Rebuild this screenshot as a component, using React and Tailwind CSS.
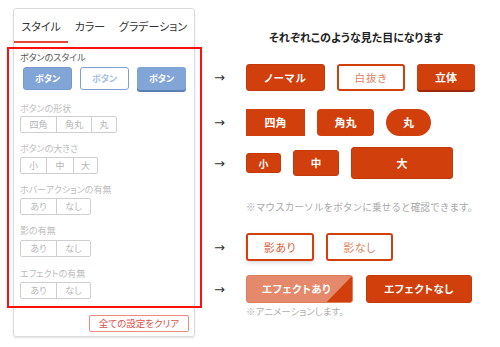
import React from "react";

const JP = { fontFamily: '"Noto Sans CJK JP", "Noto Sans", sans-serif' };

function Seg({ items, widths }) {
  return (
    <div className="flex h-[17px] border border-[#cfcfcf] rounded-[2px] w-fit bg-white">
      {items.map((t, i) => (
        <div
          key={t}
          className={`flex items-center justify-center text-[9px] text-[#b5b5b5] leading-none ${i > 0 ? "border-l border-[#cfcfcf]" : ""}`}
          style={{ width: widths[i] }}
        >
          {t}
        </div>
      ))}
    </div>
  );
}

function Label({ children, dark, className = "" }) {
  return (
    <div className={`h-[12px] text-[9px] leading-[12px] ${dark ? "text-[#555]" : "text-[#bdbdbd]"} ${className}`}>
      {children}
    </div>
  );
}

function Arrow() {
  return (
    <div className="w-[32px] flex items-center text-[13px] text-[#333] leading-none" style={{ fontFamily: '"DejaVu Sans", sans-serif' }}>
      →
    </div>
  );
}

export default function App() {
  return (
    <div className="w-[500px] h-[347px] bg-white flex overflow-hidden [font-feature-settings:'palt']" style={JP}>
      {/* Left panel */}
      <div className="relative ml-[13px] mt-[8px] w-[182px] h-[329px] border border-[#dcdcdc] rounded-[3px] shadow-[0_1px_2px_rgba(0,0,0,0.12)] flex flex-col">
        <div className="flex h-[34px] text-[11px] text-[#333]">
          <div className="w-[54px] flex items-center justify-center border-b-2 border-[#e8463a] pt-[3px]">スタイル</div>
          <div className="w-[44px] flex items-center justify-center pt-[1px]">カラー</div>
          <div className="w-[82px] flex items-center justify-center pt-[1px]">グラデーション</div>
        </div>
        <div className="flex flex-col pl-[6px]">
          <Label dark className="mt-[9px]">ボタンのスタイル</Label>
          <div className="flex gap-[8px] mt-[3px] ml-[3px]">
            <div className="w-[49px] h-[23px] rounded-[3px] bg-[#82a5d8] border border-[#7599cd] flex items-center justify-center text-white text-[9px] font-bold">ボタン</div>
            <div className="w-[49px] h-[23px] rounded-[3px] bg-white border-[1.5px] border-[#7ea1d4] flex items-center justify-center text-[#a9c0e3] text-[9px] font-bold">ボタン</div>
            <div className="w-[49px] h-[23px] rounded-[3px] bg-[#82a5d8] shadow-[0_2px_0_#5c7db0] flex items-center justify-center text-white text-[9px] font-bold">ボタン</div>
          </div>
          <Label className="mt-[13px]">ボタンの形状</Label>
          <div className="mt-[1px]"><Seg items={["四角", "角丸", "丸"]} widths={[35, 35, 25]} /></div>
          <Label className="mt-[10px]">ボタンの大きさ</Label>
          <div className="mt-[2px]"><Seg items={["小", "中", "大"]} widths={[25, 27, 24]} /></div>
          <Label className="mt-[10px]">ホバーアクションの有無</Label>
          <div className="mt-[2px]"><Seg items={["あり", "なし"]} widths={[35, 34]} /></div>
          <Label className="mt-[10px]">影の有無</Label>
          <div className="mt-[3px]"><Seg items={["あり", "なし"]} widths={[35, 34]} /></div>
          <Label className="mt-[11px]">エフェクトの有無</Label>
          <div className="mt-[2px]"><Seg items={["あり", "なし"]} widths={[35, 34]} /></div>
        </div>
        <div className="flex justify-end pr-[5px] mt-[16px]">
          <div className="w-[100px] h-[17px] border border-[#ea8a84] rounded-[2px] flex items-center justify-center text-[9.5px] text-[#e0504a] leading-none">全ての設定をクリア</div>
        </div>
        {/* red annotation frame */}
        <div className="absolute left-[-7px] top-[38px] w-[195px] h-[261px] border-2 border-[#ff1010] pointer-events-none" />
      </div>

      {/* Right column */}
      <div className="ml-[19px] w-[286px] flex flex-col">
        <div className="mt-[29px] h-[16px] text-center text-[11px] font-bold text-[#222] leading-[16px] pr-[2px]">それぞれこのような見た目になります</div>

        <div className="flex mt-[19px] h-[27px]">
          <Arrow />
          <div className="flex gap-[12px]">
            <div className="w-[79px] h-[27px] rounded-[3px] bg-[#d13f0c] border border-[#c3390a] flex items-center justify-center text-white text-[10.5px] font-bold tracking-[1px]">ノーマル</div>
            <div className="w-[68px] h-[27px] rounded-[3px] bg-white border-2 border-[#d13f0c] flex items-center justify-center text-[#e0825f] text-[10.5px] tracking-[1px]">白抜き</div>
            <div className="w-[58px] h-[26px] rounded-[3px] bg-[#d13f0c] shadow-[0_2px_0_#99290a] flex items-center justify-center text-white text-[11px] font-bold">立体</div>
          </div>
        </div>

        <div className="flex mt-[18px] h-[27px]">
          <Arrow />
          <div className="flex gap-[12px]">
            <div className="w-[59px] h-[27px] bg-[#d13f0c] flex items-center justify-center text-white text-[11px] font-bold">四角</div>
            <div className="w-[57px] h-[27px] rounded-[4px] bg-[#d13f0c] flex items-center justify-center text-white text-[11px] font-bold">角丸</div>
            <div className="w-[45px] h-[27px] rounded-full bg-[#d13f0c] flex items-center justify-center text-white text-[11px] font-bold">丸</div>
          </div>
        </div>

        <div className="flex mt-[11px] h-[32px] items-center">
          <Arrow />
          <div className="flex gap-[12px] items-center">
            <div className="w-[35px] h-[20px] rounded-[3px] bg-[#d13f0c] border border-[#c3390a] flex items-center justify-center text-white text-[10px] font-bold">小</div>
            <div className="w-[46px] h-[26px] rounded-[3px] bg-[#d13f0c] border border-[#c3390a] flex items-center justify-center text-white text-[10.5px] font-bold">中</div>
            <div className="w-[102px] h-[32px] rounded-[3px] bg-[#d13f0c] border border-[#c3390a] flex items-center justify-center text-white text-[11px] font-bold">大</div>
          </div>
        </div>

        <div className="mt-[21px] ml-[32px] h-[14px] text-[9.7px] leading-[14px] text-[#a9a9a9] whitespace-nowrap [font-feature-settings:normal]">※マウスカーソルをボタンに乗せると確認できます。</div>

        <div className="flex mt-[19px] h-[28px]">
          <Arrow />
          <div className="flex gap-[12px]">
            <div className="w-[68px] h-[28px] rounded-[3px] bg-white border-2 border-[#d13f0c] shadow-[0_2px_4px_rgba(0,0,0,0.15)] flex items-center justify-center text-[#d8603a] text-[11px] tracking-[0.5px]">影あり</div>
            <div className="w-[67px] h-[28px] rounded-[3px] bg-white border-2 border-[#d13f0c] flex items-center justify-center text-[#e0825f] text-[11px] tracking-[0.5px]">影なし</div>
          </div>
        </div>

        <div className="flex mt-[14px] h-[28px]">
          <Arrow />
          <div className="flex gap-[13px]">
            <div className="relative w-[107px] h-[28px] rounded-[3px] bg-[#e4896b] border border-[#df7e5e] overflow-hidden flex items-center justify-center text-white text-[10.5px] font-bold tracking-[0.5px]">
              <div className="absolute inset-0 bg-[#d13f0c] [clip-path:polygon(100%_0,100%_100%,76%_100%)]" />
              <span className="relative pr-[6px]">エフェクトあり</span>
            </div>
            <div className="w-[106px] h-[28px] rounded-[3px] bg-[#d13f0c] border border-[#c3390a] flex items-center justify-center text-white text-[10.5px] font-bold tracking-[0.5px]">エフェクトなし</div>
          </div>
        </div>

        <div className="mt-[1px] ml-[32px] h-[14px] text-[9.5px] leading-[14px] text-[#b0b0b0] whitespace-nowrap">※アニメーションします。</div>
      </div>
    </div>
  );
}
